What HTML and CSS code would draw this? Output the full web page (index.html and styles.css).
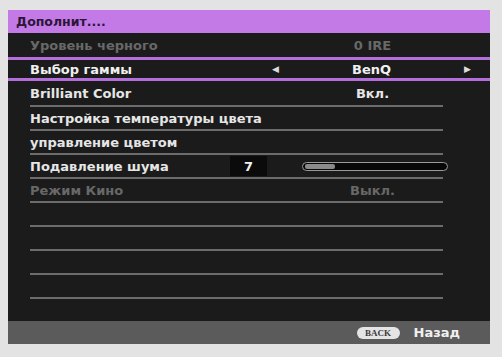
FILE: index.html
```html
<!DOCTYPE html>
<html lang="ru">
  <head>
    <meta charset="UTF-8" />
    <meta name="viewport" content="width=device-width, initial-scale=1.0" />
    <title>Дополнит....</title>
    <link rel="stylesheet" href="styles.css">
  </head>
  <body>
    <div class="osd">
      <div class="osd-title">Дополнит....</div>

      <div class="menu">
        <div class="row row-top disabled">
          <span class="label">Уровень черного</span>
          <span class="value">0 IRE</span>
        </div>

        <div class="row-select">
          <span class="label">Выбор гаммы</span>
          <span class="selector">
            <span class="arrow">&#9664;</span>
            <span>BenQ</span>
            <span class="arrow">&#9654;</span>
          </span>
        </div>

        <div class="row row-first">
          <span class="label">Brilliant Color</span>
          <span class="value">Вкл.</span>
        </div>
        <div class="row">
          <span class="label">Настройка температуры цвета</span>
        </div>
        <div class="row">
          <span class="label">управление цветом</span>
        </div>
        <div class="row row-noise">
          <span class="label">Подавление шума</span>
          <span class="num-box">7</span>
          <span class="slider"><span class="slider-fill"></span></span>
        </div>
        <div class="row disabled">
          <span class="label">Режим Кино</span>
          <span class="value">Выкл.</span>
        </div>
        <!-- пустые строки -->
        <div class="row"></div>
        <div class="row"></div>
        <div class="row"></div>
        <div class="row"></div>
      </div>

      <div class="osd-footer">
        <span class="back-key">BACK</span>
        <span class="back-text">Назад</span>
      </div>
    </div>
  </body>
</html>
```

FILE: styles.css
```css
body {
  margin: 0;
  padding: 10px 12px 0 8px;
  background: #e3e3e3;
  font-family: "DejaVu Sans", sans-serif;
  font-weight: bold;
  font-size: 13px;
  height: 357px;
  box-sizing: border-box;
}
.osd {
  width: 482px;
  background: #1b1b1b;
  display: flex;
  flex-direction: column;
}
.osd-title {
  height: 23px;
  background: #c47ae6;
  color: #2a1638;
  padding-left: 8px;
  display: flex;
  align-items: center;
  font-size: 12.5px;
}
.menu {
  padding-bottom: 22px;
}
.row {
  height: 22px;
  margin: 0 47px 0 22px;
  border-bottom: 2px solid #6c6c6c;
  display: grid;
  grid-template-columns: 200px 37px 35px 141px;
  align-items: center;
  color: #e6e6e6;
}
.row-top {
  height: 24px;
  border-bottom: none;
}
.row-first {
  height: 24px;
}
.row .label {
  grid-column: 1 / 4;
  white-space: nowrap;
}
.row-noise .label {
  grid-column: 1;
}
.row .value {
  grid-column: 4;
  text-align: center;
}
.disabled {
  color: #686868;
}
.row-select {
  height: 18px;
  border-top: 3px solid #b46fdc;
  border-bottom: 3px solid #b46fdc;
  padding-left: 22px;
  display: grid;
  grid-template-columns: 242px 199px;
  align-items: center;
  color: #f0f0f0;
}
.selector {
  display: flex;
  justify-content: space-between;
  align-items: center;
}
.arrow {
  font-size: 9px;
  color: #dcdcdc;
}
.num-box {
  grid-column: 2;
  height: 20px;
  background: #0b0b0b;
  color: #f2f2f2;
  display: flex;
  align-items: center;
  justify-content: center;
  font-size: 13px;
}
.slider {
  grid-column: 4;
  width: 146px;
  height: 9px;
  box-sizing: border-box;
  border: 1px solid #9a9a9a;
  border-radius: 5px;
  background: #070707;
  padding: 1px 2px;
  display: flex;
}
.slider-fill {
  width: 30px;
  height: 100%;
  border-radius: 2px;
  background: #8a8a8a;
}
.osd-footer {
  height: 23px;
  background: #5b5b5b;
  display: flex;
  align-items: center;
  justify-content: flex-end;
  padding-right: 30px;
  gap: 14px;
}
.back-key {
  width: 43px;
  height: 12px;
  border-radius: 6px;
  background: #e4e4e4;
  color: #3a3a3a;
  font-family: "Liberation Serif", serif;
  font-size: 9px;
  display: flex;
  align-items: center;
  justify-content: center;
}
.back-text {
  color: #f0f0f0;
  font-size: 13px;
}
```
